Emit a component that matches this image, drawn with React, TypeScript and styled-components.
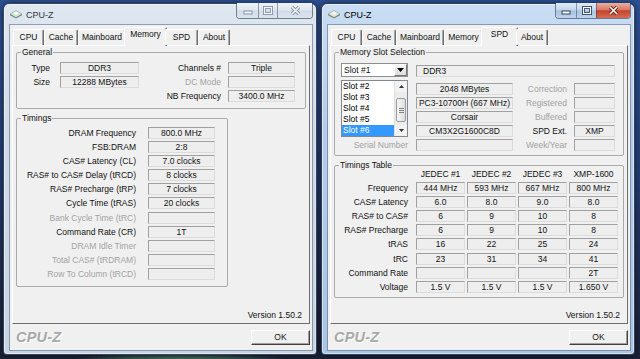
import React from 'react';
import styled, { createGlobalStyle } from 'styled-components';

const GlobalStyle = createGlobalStyle`
  html, body {
    margin: 0;
    padding: 0;
  }
  body {
    width: 640px;
    height: 359px;
    overflow: hidden;
    font-family: "Liberation Sans", Arial, sans-serif;
    color: #111;
  }
`;

const Desktop = styled.div`
  width: 640px;
  height: 359px;
  box-sizing: border-box;
  padding: 3px 0 0 3px;
  display: flex;
  align-items: flex-start;
  gap: 4px;
  overflow: hidden;
  background:
    radial-gradient(ellipse 120px 12px at 180px 364px, #5fae74 0%, rgba(60, 120, 80, 0) 100%),
    linear-gradient(180deg, #2c5296 0%, #243f78 45%, #1b2136 100%);
`;

const Window = styled.div<{ $active?: boolean }>`
  width: 314px;
  height: 352px;
  box-sizing: border-box;
  display: flex;
  flex-direction: column;
  border: 1px solid rgba(20, 30, 50, 0.8);
  border-radius: 6px 6px 4px 4px;
  background: ${p =>
    p.$active
      ? 'linear-gradient(180deg, #c9ddf3 0%, #b5cdea 35%, #a9c4e4 100%)'
      : 'linear-gradient(180deg, #dfe7f1 0%, #d0dbe8 35%, #c7d4e3 100%)'};
  box-shadow: inset 0 0 0 1px rgba(255, 255, 255, 0.5), 0 0 6px rgba(0, 0, 0, 0.55);
`;

const TitleBar = styled.div`
  height: 21px;
  display: flex;
  align-items: center;
  padding: 0 3px 0 6px;
`;

const TitleText = styled.span<{ $active?: boolean }>`
  font-size: 9px;
  margin-left: 4px;
  color: ${p => (p.$active ? '#000' : '#333')};
`;

const CaptionButtons = styled.div`
  margin-left: auto;
  align-self: flex-start;
  margin-top: -1px;
  height: 15px;
  display: flex;
  border: 1px solid rgba(40, 55, 80, 0.6);
  border-top: none;
  border-radius: 0 0 4px 4px;
  overflow: hidden;
`;

const CaptionButton = styled.div<{ $w: number; $active?: boolean; $close?: boolean }>`
  width: ${p => p.$w}px;
  display: flex;
  align-items: center;
  justify-content: center;
  background: ${p =>
    p.$close && p.$active
      ? 'linear-gradient(180deg, #eab0a2 0%, #d87a64 45%, #c4442b 52%, #d66b55 100%)'
      : p.$active
      ? 'linear-gradient(180deg, #e0eaf6 0%, #c3d5eb 48%, #aac3e2 52%, #bcd2ec 100%)'
      : 'linear-gradient(180deg, #eef2f7 0%, #dfe6ef 48%, #d2dce8 52%, #dbe3ed 100%)'};
  & + & {
    border-left: 1px solid rgba(40, 55, 80, 0.45);
  }
`;

const ClientWrap = styled.div`
  flex: 1;
  display: flex;
  padding: 0 4px 4px 6px;
`;

const Client = styled.div`
  flex: 1;
  display: flex;
  flex-direction: column;
  padding: 2px 2px 0 2px;
  background: #f0f0f0;
  box-shadow: 0 0 0 1px rgba(80, 100, 130, 0.55);
`;

const TabStrip = styled.div`
  height: 18px;
  display: flex;
  align-items: flex-end;
  padding-left: 1px;
  position: relative;
  z-index: 1;
`;

const Tab = styled.div<{ $w: number; $sel?: boolean }>`
  width: ${p => p.$w + (p.$sel ? 4 : 0)}px;
  height: ${p => (p.$sel ? 19 : 16)}px;
  margin: ${p => (p.$sel ? '0 -2px -1px -2px' : '0')};
  box-sizing: border-box;
  border-top: 1px solid #fff;
  border-left: 1px solid #fff;
  border-right: 1px solid #6d6d6d;
  border-radius: 2px 2px 0 0;
  box-shadow: inset -1px 0 0 #a8a8a8;
  background: #f0f0f0;
  font-size: 8.5px;
  line-height: ${p => (p.$sel ? 13 : 15)}px;
  text-align: center;
  white-space: nowrap;
  color: #111;
`;

const Panel = styled.div`
  height: 279px;
  box-sizing: border-box;
  display: flex;
  flex-direction: column;
  padding: 1px 3px 3px 3px;
  border: 1px solid;
  border-color: #fff #6d6d6d #6d6d6d #fff;
  background: #f0f0f0;
`;

const Group = styled.fieldset<{ $h: number; $w?: number; $mt?: number }>`
  margin: ${p => p.$mt ?? 0}px 0 0 0;
  padding: 0;
  min-width: 0;
  box-sizing: border-box;
  height: ${p => p.$h}px;
  width: ${p => (p.$w ? `${p.$w}px` : 'auto')};
  border: 1px solid #aaaaaa;
  border-radius: 2px;
`;

const GroupTitle = styled.legend`
  font-size: 8.5px;
  line-height: 10px;
  padding: 0 1px;
  margin-left: 4px;
  color: #111;
`;

const Label = styled.div<{ $pr?: number; $dim?: boolean }>`
  font-size: 8.5px;
  line-height: 12px;
  text-align: right;
  white-space: nowrap;
  padding-right: ${p => p.$pr ?? 0}px;
  color: ${p => (p.$dim ? '#a2a2a2' : '#111')};
`;

const ValueBox = styled.div<{ $left?: boolean }>`
  height: 12px;
  box-sizing: border-box;
  border: 1px solid;
  border-color: #a0a0a0 #dcdcdc #dcdcdc #a0a0a0;
  background: #eeeeee;
  font-size: 8.5px;
  line-height: 10px;
  text-align: ${p => (p.$left ? 'left' : 'center')};
  padding-left: ${p => (p.$left ? 6 : 0)}px;
  white-space: nowrap;
  overflow: hidden;
  color: #111;
`;

const GeneralGrid = styled.div`
  display: grid;
  grid-template-columns: 43px 79px 89px 67px;
  grid-auto-rows: 12px;
  row-gap: 2px;
  padding-top: 5px;
`;

const TimingsGrid = styled.div`
  display: grid;
  grid-template-columns: 131px 67px;
  grid-auto-rows: 12px;
  row-gap: 2.1px;
  padding-top: 4px;
`;

const Version = styled.div`
  margin-top: auto;
  font-size: 8.5px;
  line-height: 10px;
  text-align: right;
  padding-right: 4px;
  color: #111;
`;

const Footer = styled.div`
  height: 26px;
  display: flex;
  align-items: center;
  justify-content: space-between;
  padding-left: 4px;
`;

const Brand = styled.div`
  font-size: 14.5px;
  font-weight: bold;
  font-style: italic;
  color: #a8a8a8;
  text-shadow: 1px 1px 0 #fff;
  letter-spacing: 0.2px;
`;

const OkButton = styled.div`
  width: 59px;
  height: 15px;
  box-sizing: border-box;
  border: 1px solid;
  border-color: #fff #404040 #404040 #fff;
  box-shadow: inset -1px -1px 0 #a0a0a0;
  background: #f0f0f0;
  font-size: 8.5px;
  line-height: 13px;
  text-align: center;
  color: #111;
`;

/* SPD page */

const SlotArea = styled.div`
  display: flex;
  gap: 8px;
  padding: 6px 0 0 6px;
`;

const SlotColumn = styled.div`
  width: 67px;
  display: flex;
  flex-direction: column;
`;

const SlotSelect = styled.div`
  height: 14px;
  box-sizing: border-box;
  border: 1px solid #8e8f8f;
  background: #fff;
  display: flex;
  font-size: 8.5px;
  line-height: 12px;
  padding-left: 2px;
`;

const SelectArrow = styled.div`
  margin-left: auto;
  width: 13px;
  margin-top: 0;
  box-sizing: border-box;
  border: 1px solid;
  border-color: #fff #777 #777 #fff;
  background: linear-gradient(180deg, #f4f4f4, #dcdcdc);
  display: flex;
  align-items: center;
  justify-content: center;
`;

const SlotList = styled.div`
  margin-top: 3px;
  height: 57px;
  box-sizing: border-box;
  border: 1px solid #828790;
  background: #fff;
  display: flex;
`;

const SlotItems = styled.div`
  flex: 1;
  display: flex;
  flex-direction: column;
`;

const SlotItem = styled.div<{ $sel?: boolean }>`
  height: 11px;
  font-size: 8.5px;
  line-height: 11px;
  padding-left: 1px;
  background: ${p => (p.$sel ? '#3399ff' : 'transparent')};
  color: ${p => (p.$sel ? '#fff' : '#000')};
`;

const ScrollBar = styled.div`
  width: 12px;
  display: flex;
  flex-direction: column;
  align-items: center;
  background: #ececec;
  border-left: 1px solid #e0e0e0;
`;

const ScrollArrow = styled.div`
  height: 11px;
  width: 100%;
  display: flex;
  align-items: center;
  justify-content: center;
  background: #f2f2f2;
`;

const ScrollThumb = styled.div`
  margin-top: 6px;
  height: 24px;
  width: 10px;
  box-sizing: border-box;
  border: 1px solid #9a9a9a;
  border-radius: 2px;
  background: linear-gradient(90deg, #f6f6f6, #dedede);
  display: flex;
  align-items: center;
  justify-content: center;
`;

const SerialLabel = styled(Label)`
  margin-top: 1.7px;
`;

const InfoColumn = styled.div`
  width: 199px;
  display: flex;
  flex-direction: column;
  padding-top: 2px;
`;

const InfoRows = styled.div`
  margin-top: 5.7px;
  display: grid;
  grid-template-columns: 97px 61px 41px;
  grid-auto-rows: 12px;
  row-gap: 2px;
`;

const TableGrid = styled.div`
  margin-top: -2px;
  display: grid;
  grid-template-columns: 79px 49px 49px 49px 49px;
  grid-auto-rows: 12px;
  column-gap: 2px;
  row-gap: 2.1px;
`;

const HeadCell = styled.div`
  font-size: 8.5px;
  line-height: 12px;
  text-align: center;
  white-space: nowrap;
  color: #111;
`;

const ChipIcon = () => (
  <svg width="12" height="9" viewBox="0 0 12 9">
    <polygon points="0,4 6,0.6 12,4 6,7.4" fill="#dfe6de" stroke="#8a9a8a" strokeWidth="0.6" />
    <polygon points="0,4 6,7.4 12,4 12,5.2 6,8.6 0,5.2" fill="#6f8a70" />
    <polygon points="3,3.1 6,1.5 9,3.1 6,4.8" fill="#f6f8f6" />
  </svg>
);

const Caption = ({ active }: { active?: boolean }) => {
  const dark = active ? '#2f4363' : '#8393a8';
  const light = active ? '#ffffff' : '#f3f6f9';
  return (
    <CaptionButtons>
      <CaptionButton $w={active ? 20 : 21} $active={active}>
        <svg width="10" height="8" viewBox="0 0 10 8">
          <rect x="1" y="4" width="8" height="3" fill={light} stroke={dark} strokeWidth="1" />
        </svg>
      </CaptionButton>
      <CaptionButton $w={active ? 19 : 18} $active={active}>
        <svg width="10" height="9" viewBox="0 0 10 9">
          <rect x="1.5" y="1.5" width="7" height="6" fill="none" stroke={dark} strokeWidth="3" />
          <rect x="1.5" y="1.5" width="7" height="6" fill="none" stroke={light} strokeWidth="1.2" />
        </svg>
      </CaptionButton>
      <CaptionButton $w={active ? 33 : 34} $active={active} $close>
        <svg width="11" height="9" viewBox="0 0 11 9">
          <path d="M2 1 L9 8 M9 1 L2 8" stroke={active ? '#6b1f14' : dark} strokeWidth="3.4" />
          <path d="M2 1 L9 8 M9 1 L2 8" stroke={light} strokeWidth="1.6" />
        </svg>
      </CaptionButton>
    </CaptionButtons>
  );
};

const TABS: [string, number][] = [
  ['CPU', 31],
  ['Cache', 34],
  ['Mainboard', 48],
  ['Memory', 39],
  ['SPD', 33],
  ['About', 32],
];

interface CpuzWindowProps {
  active?: boolean;
  page: string;
  children: React.ReactNode;
}

const CpuzWindow = ({ active, page, children }: CpuzWindowProps) => (
  <Window $active={active}>
    <TitleBar>
      <ChipIcon />
      <TitleText $active={active}>CPU-Z</TitleText>
      <Caption active={active} />
    </TitleBar>
    <ClientWrap>
      <Client>
        <TabStrip>
          {TABS.map(([name, w]) => (
            <Tab key={name} $w={w} $sel={name === page}>
              {name}
            </Tab>
          ))}
        </TabStrip>
        <Panel>
          {children}
          <Version>Version 1.50.2</Version>
        </Panel>
        <Footer>
          <Brand>CPU-Z</Brand>
          <OkButton>OK</OkButton>
        </Footer>
      </Client>
    </ClientWrap>
  </Window>
);

const TIMINGS: [string, string, boolean?][] = [
  ['DRAM Frequency', '800.0 MHz'],
  ['FSB:DRAM', '2:8'],
  ['CAS# Latency (CL)', '7.0 clocks'],
  ['RAS# to CAS# Delay (tRCD)', '8 clocks'],
  ['RAS# Precharge (tRP)', '7 clocks'],
  ['Cycle Time (tRAS)', '20 clocks'],
  ['Bank Cycle Time (tRC)', '', true],
  ['Command Rate (CR)', '1T'],
  ['DRAM Idle Timer', '', true],
  ['Total CAS# (tRDRAM)', '', true],
  ['Row To Column (tRCD)', '', true],
];

const MemoryPage = () => (
  <>
    <Group $h={62}>
      <GroupTitle>General</GroupTitle>
      <GeneralGrid>
        <Label $pr={10}>Type</Label>
        <ValueBox>DDR3</ValueBox>
        <Label $pr={7}>Channels #</Label>
        <ValueBox>Triple</ValueBox>
        <Label $pr={10}>Size</Label>
        <ValueBox>12288 MBytes</ValueBox>
        <Label $pr={7} $dim>
          DC Mode
        </Label>
        <ValueBox />
        <div />
        <div />
        <Label $pr={7}>NB Frequency</Label>
        <ValueBox>3400.0 MHz</ValueBox>
      </GeneralGrid>
    </Group>
    <Group $h={174} $w={212} $mt={4}>
      <GroupTitle>Timings</GroupTitle>
      <TimingsGrid>
        {TIMINGS.map(([label, value, dim]) => (
          <React.Fragment key={label}>
            <Label $pr={12} $dim={dim}>
              {label}
            </Label>
            <ValueBox>{value}</ValueBox>
          </React.Fragment>
        ))}
      </TimingsGrid>
    </Group>
  </>
);

const MODULE_ROWS: [string, string, string, boolean][] = [
  ['2048 MBytes', 'Correction', '', true],
  ['PC3-10700H (667 MHz)', 'Registered', '', true],
  ['Corsair', 'Buffered', '', true],
  ['CM3X2G1600C8D', 'SPD Ext.', 'XMP', false],
  ['', 'Week/Year', '', true],
];

const SPD_TABLE: [string, string[]][] = [
  ['Frequency', ['444 MHz', '593 MHz', '667 MHz', '800 MHz']],
  ['CAS# Latency', ['6.0', '8.0', '9.0', '8.0']],
  ['RAS# to CAS#', ['6', '9', '10', '8']],
  ['RAS# Precharge', ['6', '9', '10', '8']],
  ['tRAS', ['16', '22', '25', '24']],
  ['tRC', ['23', '31', '34', '41']],
  ['Command Rate', ['', '', '', '2T']],
  ['Voltage', ['1.5 V', '1.5 V', '1.5 V', '1.650 V']],
];

const SpdPage = () => (
  <>
    <Group $h={109}>
      <GroupTitle>Memory Slot Selection</GroupTitle>
      <SlotArea>
        <SlotColumn>
          <SlotSelect>
            Slot #1
            <SelectArrow>
              <svg width="7" height="4" viewBox="0 0 7 4">
                <polygon points="0,0 7,0 3.5,4" fill="#000" />
              </svg>
            </SelectArrow>
          </SlotSelect>
          <SlotList>
            <SlotItems>
              {[2, 3, 4, 5, 6].map(n => (
                <SlotItem key={n} $sel={n === 6}>
                  Slot #{n}
                </SlotItem>
              ))}
            </SlotItems>
            <ScrollBar>
              <ScrollArrow>
                <svg width="5" height="3" viewBox="0 0 5 3">
                  <polygon points="0,3 5,3 2.5,0" fill="#333" />
                </svg>
              </ScrollArrow>
              <ScrollThumb>
                <svg width="5" height="5" viewBox="0 0 5 5">
                  <path d="M0 0.5 H5 M0 2.5 H5 M0 4.5 H5" stroke="#777" strokeWidth="0.9" />
                </svg>
              </ScrollThumb>
              <ScrollArrow style={{ marginTop: 'auto' }}>
                <svg width="5" height="3" viewBox="0 0 5 3">
                  <polygon points="0,0 5,0 2.5,3" fill="#333" />
                </svg>
              </ScrollArrow>
            </ScrollBar>
          </SlotList>
          <SerialLabel $dim>Serial Number</SerialLabel>
        </SlotColumn>
        <InfoColumn>
          <ValueBox $left>DDR3</ValueBox>
          <InfoRows>
            {MODULE_ROWS.map(([value, label, extra, dim]) => (
              <React.Fragment key={label}>
                <ValueBox>{value}</ValueBox>
                <Label $pr={7} $dim={dim}>
                  {label}
                </Label>
                <ValueBox>{extra}</ValueBox>
              </React.Fragment>
            ))}
          </InfoRows>
        </InfoColumn>
      </SlotArea>
    </Group>
    <Group $h={138} $mt={4}>
      <GroupTitle>Timings Table</GroupTitle>
      <TableGrid>
        <div />
        {['JEDEC #1', 'JEDEC #2', 'JEDEC #3', 'XMP-1600'].map(h => (
          <HeadCell key={h}>{h}</HeadCell>
        ))}
        {SPD_TABLE.map(([label, values]) => (
          <React.Fragment key={label}>
            <Label $pr={6}>{label}</Label>
            {values.map((v, i) => (
              <ValueBox key={i}>{v}</ValueBox>
            ))}
          </React.Fragment>
        ))}
      </TableGrid>
    </Group>
  </>
);

const App = () => (
  <>
    <GlobalStyle />
    <Desktop>
      <CpuzWindow page="Memory">
        <MemoryPage />
      </CpuzWindow>
      <CpuzWindow page="SPD" active>
        <SpdPage />
      </CpuzWindow>
    </Desktop>
  </>
);

export default App;
